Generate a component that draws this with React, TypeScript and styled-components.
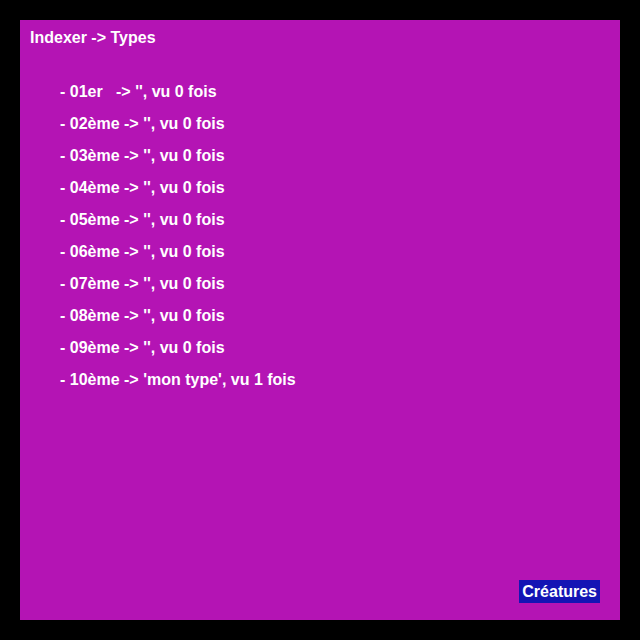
import React from "react";
import styled, { createGlobalStyle } from "styled-components";

const Global = createGlobalStyle`
  html, body { margin: 0; padding: 0; background: #000; }
  body { width: 640px; height: 640px; overflow: hidden; }
`;

const Screen = styled.div`
  width: 640px;
  height: 640px;
  box-sizing: border-box;
  padding: 20px;
  background: #000;
`;

const Panel = styled.div`
  width: 600px;
  height: 600px;
  box-sizing: border-box;
  background: #b414b4;
  display: flex;
  flex-direction: column;
  padding: 9px 20px 17px 10px;
  font-family: "Liberation Sans", Arial, sans-serif;
  font-weight: bold;
  font-size: 16px;
  color: #fff;
`;

const Title = styled.div`
  line-height: 18px;
  white-space: pre;
`;

const List = styled.div`
  display: flex;
  flex-direction: column;
  margin-top: 29px;
  padding-left: 30px;
`;

const Row = styled.div`
  line-height: 32px;
  height: 32px;
  white-space: pre;
`;

const Button = styled.button`
  margin-top: auto;
  align-self: flex-end;
  background: #1414b4;
  color: #fff;
  border: none;
  font: inherit;
  font-weight: bold;
  font-size: 16px;
  line-height: 23px;
  height: 23px;
  padding: 0 3px;
  cursor: pointer;
`;

const rows = [
  "- 01er   -> '', vu 0 fois",
  "- 02ème -> '', vu 0 fois",
  "- 03ème -> '', vu 0 fois",
  "- 04ème -> '', vu 0 fois",
  "- 05ème -> '', vu 0 fois",
  "- 06ème -> '', vu 0 fois",
  "- 07ème -> '', vu 0 fois",
  "- 08ème -> '', vu 0 fois",
  "- 09ème -> '', vu 0 fois",
  "- 10ème -> 'mon type', vu 1 fois",
];

export default function App() {
  return (
    <>
      <Global />
      <Screen>
        <Panel>
          <Title>Indexer -&gt; Types</Title>
          <List>
            {rows.map((r) => (
              <Row key={r}>{r}</Row>
            ))}
          </List>
          <Button>Créatures</Button>
        </Panel>
      </Screen>
    </>
  );
}
